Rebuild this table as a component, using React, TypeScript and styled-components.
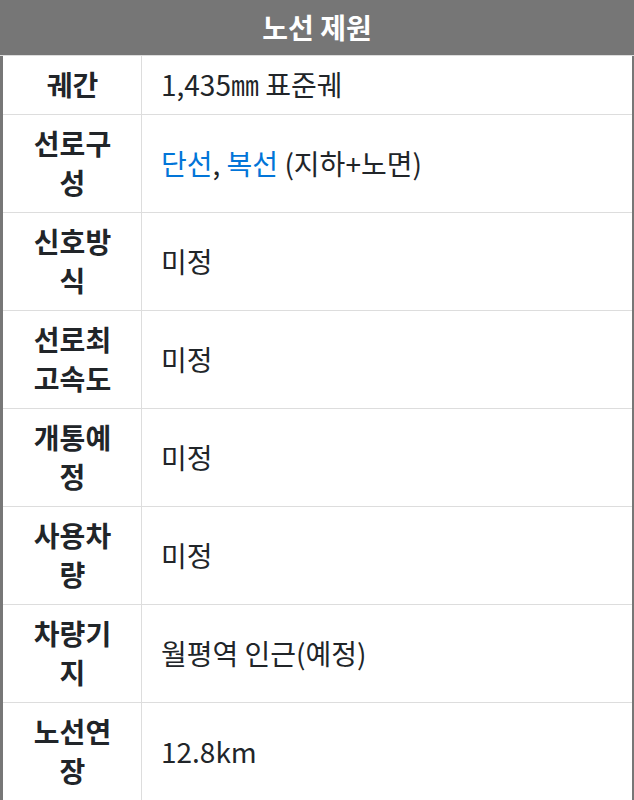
import styled, { createGlobalStyle } from "styled-components";

const GlobalStyle = createGlobalStyle`
  html, body {
    margin: 0;
    padding: 0;
    background: #ffffff;
  }
  body {
    font-family: "Noto Sans CJK KR", "Noto Sans", sans-serif;
    color: #212529;
  }
`;

const Link = styled.a`
  color: #0275d8;
  text-decoration: none;
  cursor: pointer;
`;

const StyledSpecTable = styled.div`
  width: 634px;
  box-sizing: border-box;
  border-left: 3px solid #777777;
  border-right: 2px solid #777777;
  font-size: 28px;
  line-height: 39px;
`;

const StyledTitle = styled.div`
  height: 55px;
  margin-left: -3px;
  margin-right: -2px;
  background-color: #767676;
  color: #ffffff;
  font-weight: 700;
  display: flex;
  align-items: center;
  justify-content: center;
  border-bottom: 1px solid #dddddd;
`;

const StyledRow = styled.div`
  display: grid;
  grid-template-columns: 139px 1fr;
  border-bottom: 1px solid #dddddd;
`;

const StyledLabel = styled.div`
  padding: 9px 24px 10px 25px;
  border-right: 1px solid #dddddd;
  font-weight: 700;
  text-align: center;
  word-break: break-all;
  display: flex;
  align-items: center;
  justify-content: center;
`;

const StyledValue = styled.div`
  padding: 9px 19px 10px;
  display: flex;
  align-items: center;
  flex-wrap: wrap;
  white-space: pre-wrap;
`;

type Spec = { label: string; value: React.ReactNode };

const specs: Spec[] = [
  { label: "궤간", value: "1,435㎜ 표준궤" },
  {
    label: "선로구성",
    value: (
      <span>
        <Link>단선</Link>, <Link>복선</Link> (지하+노면)
      </span>
    ),
  },
  { label: "신호방식", value: "미정" },
  { label: "선로최고속도", value: "미정" },
  { label: "개통예정", value: "미정" },
  { label: "사용차량", value: "미정" },
  { label: "차량기지", value: "월평역 인근(예정)" },
  { label: "노선연장", value: "12.8km" },
];

export default function App() {
  return (
    <>
      <GlobalStyle />
      <StyledSpecTable>
        <StyledTitle>노선 제원</StyledTitle>
        {specs.map(({ label, value }) => (
          <StyledRow key={label}>
            <StyledLabel>{label}</StyledLabel>
            <StyledValue>{value}</StyledValue>
          </StyledRow>
        ))}
      </StyledSpecTable>
    </>
  );
}
